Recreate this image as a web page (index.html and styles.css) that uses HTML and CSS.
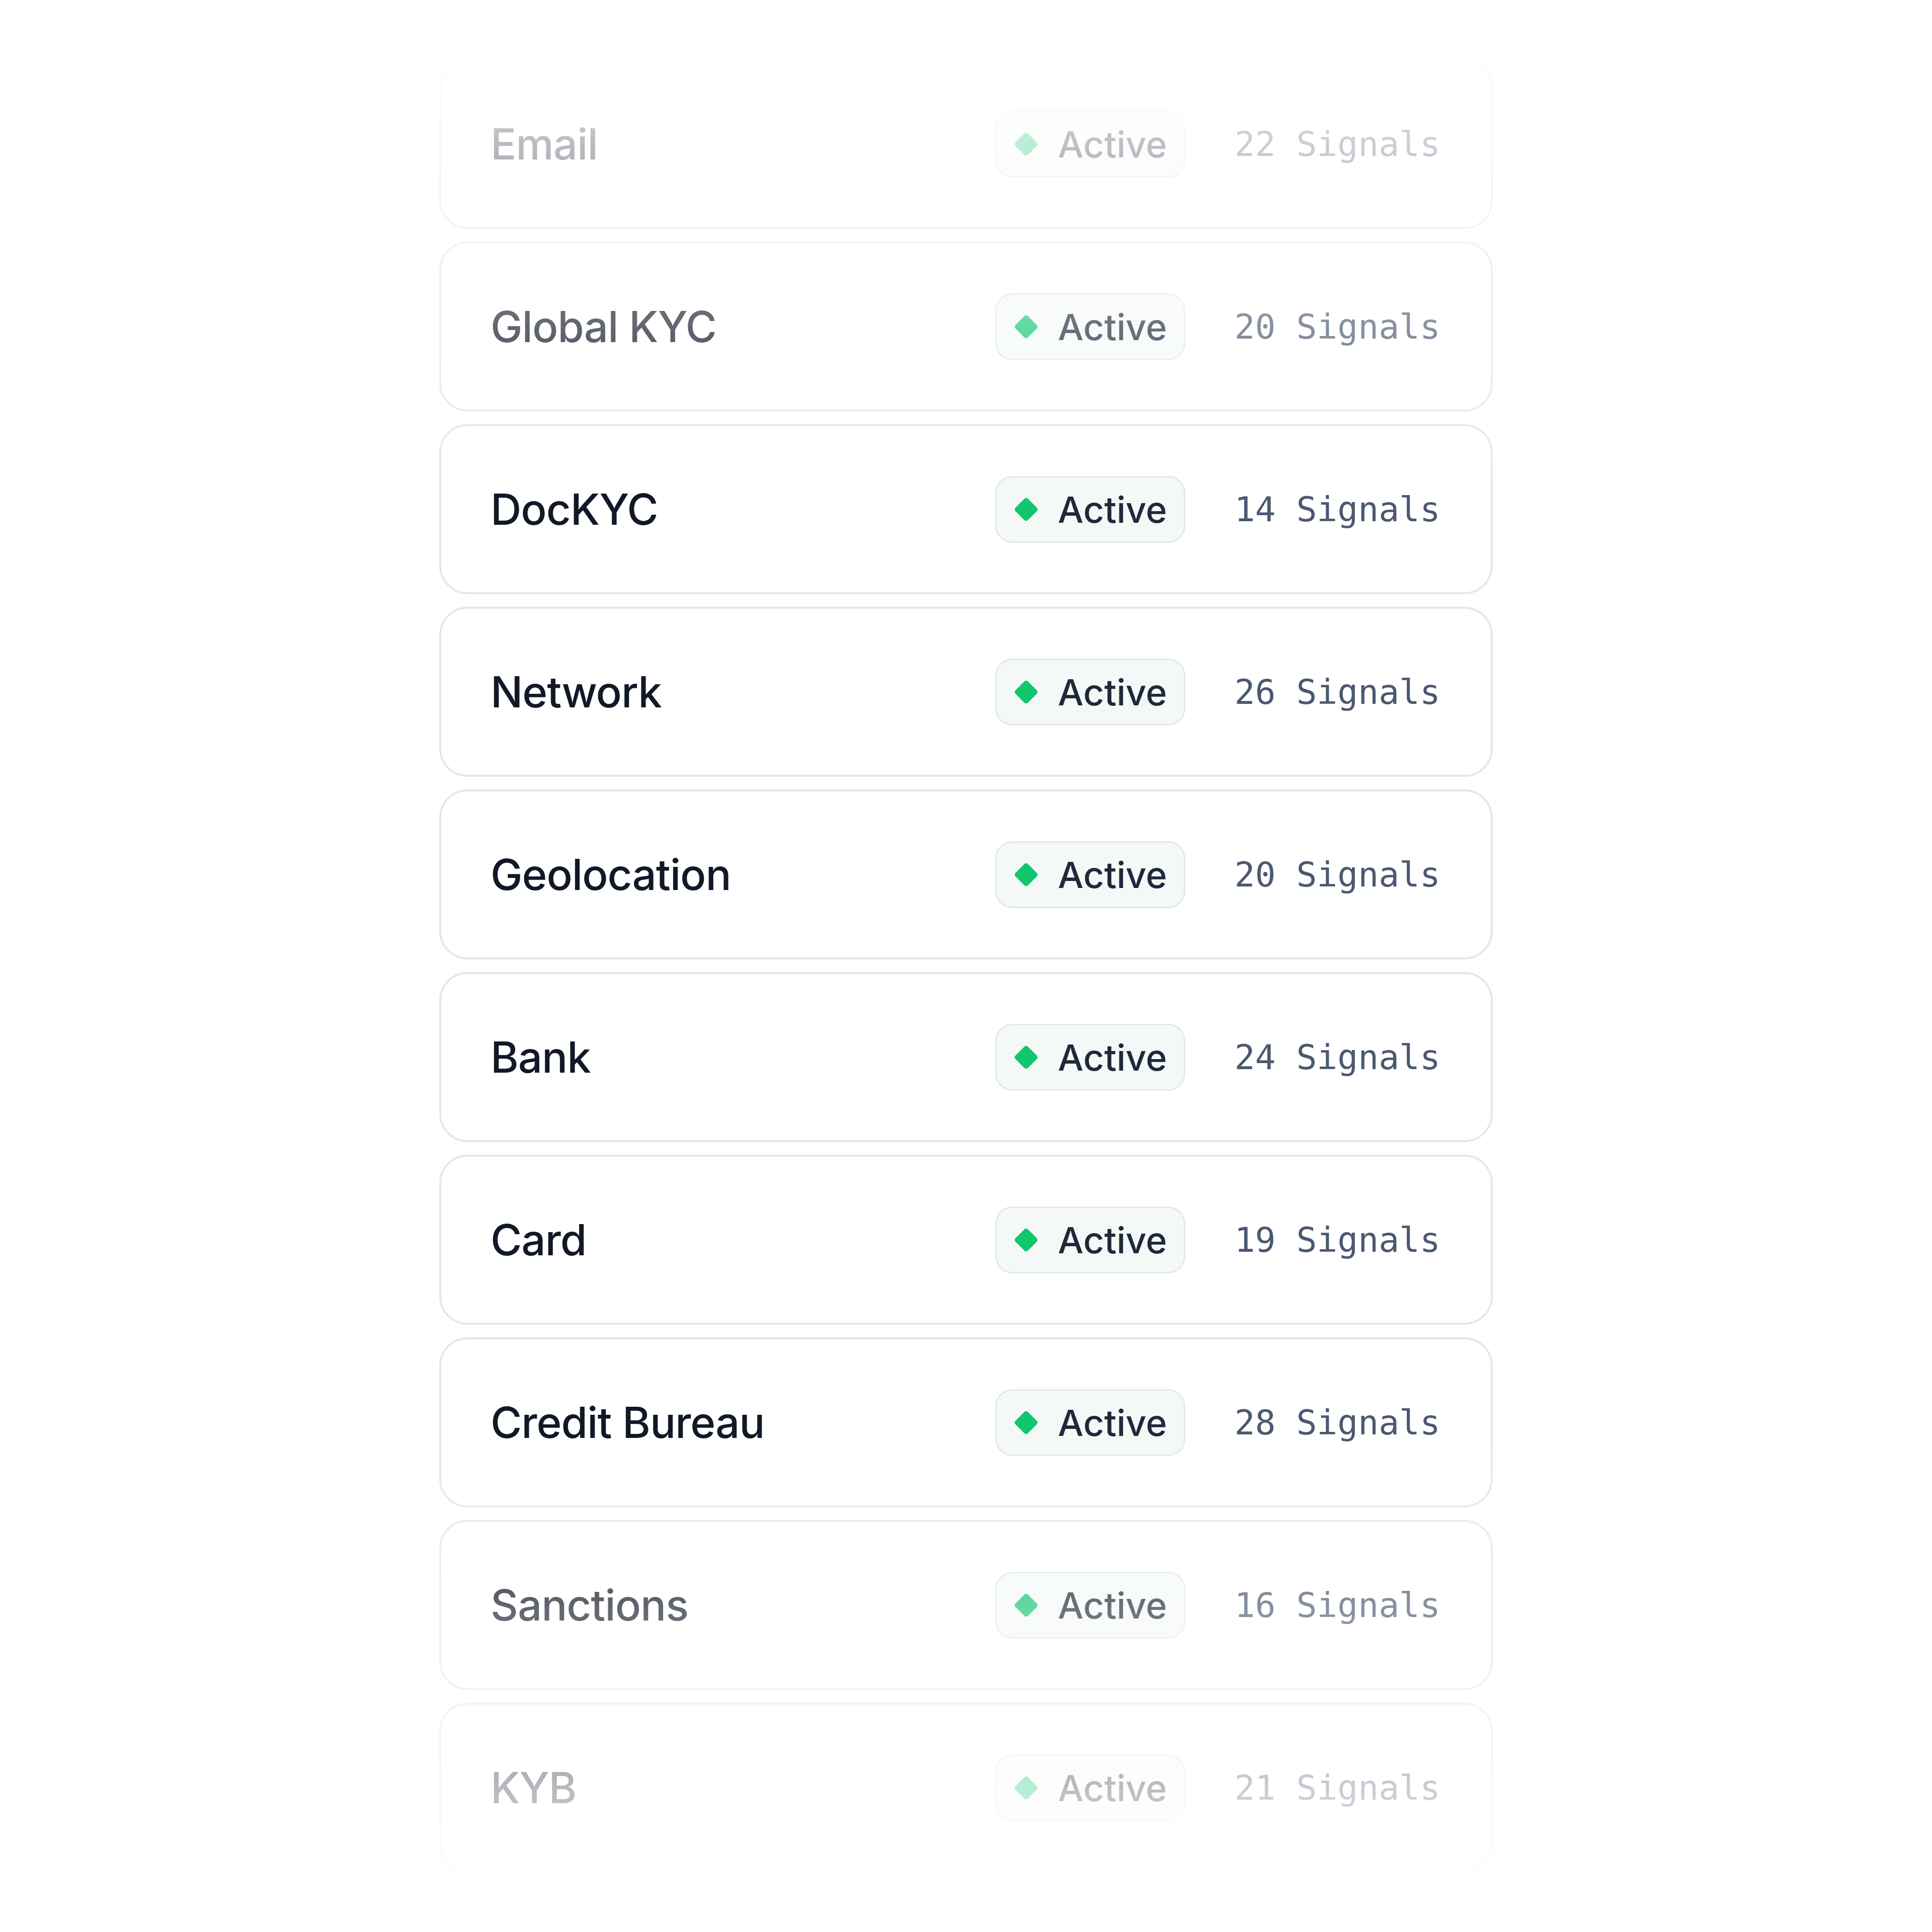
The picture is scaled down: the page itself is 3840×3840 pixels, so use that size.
FILE: index.html
```html
<!DOCTYPE html>
<html lang="en">
<head>
<meta charset="utf-8">
<title>Signals</title>
<link rel="stylesheet" href="styles.css">
</head>
<body>
<div class="viewport">
  <ul class="list">
    <li class="card card-empty" aria-hidden="true"></li>
    <li class="card"><span class="name">Email</span><span class="badge"><i class="dot"></i>Active</span><span class="signals">22 Signals</span></li>
    <li class="card"><span class="name">Global KYC</span><span class="badge"><i class="dot"></i>Active</span><span class="signals">20 Signals</span></li>
    <li class="card"><span class="name">DocKYC</span><span class="badge"><i class="dot"></i>Active</span><span class="signals">14 Signals</span></li>
    <li class="card"><span class="name">Network</span><span class="badge"><i class="dot"></i>Active</span><span class="signals">26 Signals</span></li>
    <li class="card"><span class="name">Geolocation</span><span class="badge"><i class="dot"></i>Active</span><span class="signals">20 Signals</span></li>
    <li class="card"><span class="name">Bank</span><span class="badge"><i class="dot"></i>Active</span><span class="signals">24 Signals</span></li>
    <li class="card"><span class="name">Card</span><span class="badge"><i class="dot"></i>Active</span><span class="signals">19 Signals</span></li>
    <li class="card"><span class="name">Credit Bureau</span><span class="badge"><i class="dot"></i>Active</span><span class="signals">28 Signals</span></li>
    <li class="card"><span class="name">Sanctions</span><span class="badge"><i class="dot"></i>Active</span><span class="signals">16 Signals</span></li>
    <li class="card"><span class="name">KYB</span><span class="badge"><i class="dot"></i>Active</span><span class="signals">21 Signals</span></li>
    <li class="card card-empty" aria-hidden="true"></li>
  </ul>
</div>
</body>
</html>
```
FILE: styles.css
```css
html, body {
  margin: 0;
  padding: 0;
  background: #ffffff;
}

.viewport {
  height: 3840px;
  overflow: hidden;
  display: flex;
  justify-content: center;
  -webkit-mask-image: linear-gradient(to bottom, rgba(0,0,0,0) 0px, #000 980px, #000 2860px, rgba(0,0,0,0) 3860px);
  mask-image: linear-gradient(to bottom, rgba(0,0,0,0) 0px, #000 980px, #000 2860px, rgba(0,0,0,0) 3860px);
}

.list {
  list-style: none;
  margin: -246px 0 0 0;
  padding: 0;
  display: flex;
  flex-direction: column;
  gap: 25px;
  width: 2094px;
}

.card {
  box-sizing: border-box;
  height: 338px;
  flex: none;
  display: flex;
  align-items: center;
  padding: 0 100px 0 98px;
  border: 4px solid #e6e7e9;
  border-radius: 56px;
  background: #ffffff;
}

.name {
  flex: 1;
  font-family: Inter, "Noto Sans", sans-serif;
  font-weight: 500;
  font-size: 85px;
  letter-spacing: -1px;
  color: #111827;
  white-space: nowrap;
}

.badge {
  box-sizing: border-box;
  height: 133px;
  display: flex;
  align-items: center;
  gap: 46px;
  padding: 0 33px 0 41px;
  border: 3px solid #e3e9e6;
  border-radius: 34px;
  background: #f4f9f7;
  font-family: Inter, "Noto Sans", sans-serif;
  font-weight: 500;
  font-size: 72px;
  color: #1e293b;
}

.dot {
  display: block;
  flex: none;
  width: 35px;
  height: 35px;
  border-radius: 5px;
  background: #12c66e;
  transform: rotate(45deg);
}

.signals {
  margin-left: 98px;
  font-family: "DejaVu Sans Mono", "Liberation Mono", monospace;
  font-size: 68px;
  color: #4b5870;
  white-space: nowrap;
}
```
